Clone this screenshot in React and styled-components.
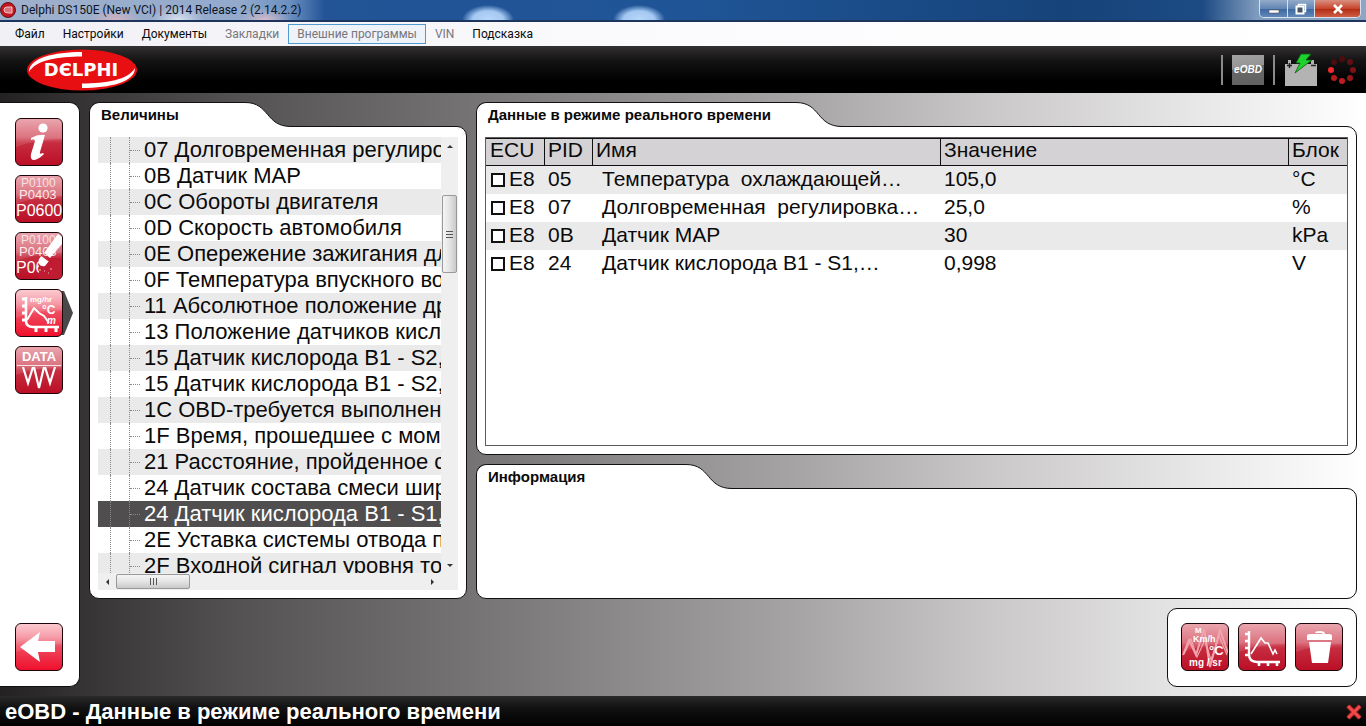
import React, { useState } from 'react';
import styled, { createGlobalStyle, css } from 'styled-components';

const GlobalStyle = createGlobalStyle`
  * {
    box-sizing: border-box;
  }
  body {
    margin: 0;
    font-family: 'Liberation Sans', Arial, sans-serif;
    color: #0a0a0a;
  }
  button {
    font: inherit;
    color: inherit;
    padding: 0;
    border: none;
    background: none;
    cursor: pointer;
  }
`;

const Window = styled.div`
  display: flex;
  flex-direction: column;
  min-height: 100vh;
`;

/* ---- title bar and menu ---- */

const TitleBar = styled.header`
  display: flex;
  align-items: flex-start;
  height: 22px;
  padding-right: 5px;
  border-bottom: 2px solid #1d355c;
  background:
    radial-gradient(ellipse 26px 12px at 115px 20px, #d3b3c0 0%, transparent 100%),
    radial-gradient(ellipse 26px 14px at 178px 20px, #d9e2f0 0%, transparent 100%),
    radial-gradient(ellipse 26px 12px at 265px 20px, #d8bccb 0%, transparent 100%),
    radial-gradient(ellipse 26px 15px at 488px 20px, #b9d8fb 0%, #a4c8f2 60%, transparent 100%),
    radial-gradient(ellipse 26px 15px at 639px 20px, #b9d8fb 0%, #a4c8f2 60%, transparent 100%),
    linear-gradient(90deg, #9fb0cb 0, #93aacd 240px, #6a8fc0 290px, #225496 325px, #1f5597 50%, #164379 78%, #1c4a83 88%, #7f9bbd 92%, #8ea6c4 100%);
`;

const AppTitle = styled.h1`
  flex: 1;
  display: flex;
  align-items: center;
  gap: 5px;
  height: 20px;
  margin: 0;
  font-family: Roboto, 'Noto Sans', sans-serif;
  font-size: 12px;
  font-weight: 400;
  color: #0c1526;
`;

const WindowButtons = styled.div`
  display: flex;
  border: 1px solid #d6e0ee;
  border-top: none;
  border-radius: 0 0 5px 5px;
  overflow: hidden;
`;

const WindowButton = styled.button`
  display: flex;
  align-items: center;
  justify-content: center;
  width: ${(props) => (props.$close ? '46px' : '27px')};
  height: 17px;
  background: ${(props) =>
    props.$close
      ? 'linear-gradient(#d98f80 0, #c8452c 50%, #b02b12 51%, #cf5f45 100%)'
      : 'linear-gradient(#93abca 0, #6386b4 50%, #3d669f 51%, #6088b8 100%)'};
  & + & {
    border-left: 1px solid #d6e0ee;
  }
`;

const MenuBar = styled.nav`
  display: flex;
  align-items: center;
  height: 24px;
  padding: 0 6px;
  background: linear-gradient(90deg, #f1f0f5 0, #fbfbfd 50%, #ffffff 100%);
  font-family: Roboto, 'Noto Sans', sans-serif;
  font-size: 12px;
`;

const MenuItem = styled.button`
  height: 20px;
  padding: 0 8px;
  border: 1px solid ${(props) => (props.$active ? '#4f9bd0' : 'transparent')};
  background: ${(props) => (props.$active ? '#edf3f9' : 'transparent')};
  color: ${(props) => (props.$muted ? '#77767a' : '#0a0a0a')};
  line-height: 18px;
  white-space: nowrap;
`;

/* ---- brand strip ---- */

const BrandBar = styled.div`
  display: flex;
  align-items: center;
  justify-content: space-between;
  height: 47px;
  padding: 0 9px 0 26px;
  background: linear-gradient(#333132 0, #151414 30%, #000 75%);
`;

const StatusIcons = styled.div`
  display: flex;
  align-items: center;
  gap: 9px;
`;

const Divider = styled.span`
  width: 2px;
  height: 30px;
  background: #8b8a8b;
`;

const ProtocolBadge = styled.span`
  display: flex;
  align-items: center;
  justify-content: center;
  width: 32px;
  height: 30px;
  background: linear-gradient(172deg, #a3a2a3 0, #949394 42%, #6a696a 43%, #626162 100%);
  color: #fff;
  font-size: 10px;
  font-style: italic;
  font-weight: 700;
`;

/* ---- workspace ---- */

const Workspace = styled.main`
  flex: 1;
  display: grid;
  grid-template-columns: 80px 378px minmax(0, 1fr);
  grid-template-rows: 1fr 135px auto;
  gap: 9px;
  padding: 9px 9px 9px 0;
  background: linear-gradient(90deg, #242122 0, #383637 7%, #555354 18%, #747273 34%, #a5a3a4 58%, #c9c7c8 72%, #e9e8e8 88%, #ffffff 100%);
`;

const SideBar = styled.aside`
  grid-row: 1 / 4;
  display: flex;
  flex-direction: column;
  gap: 9px;
  padding: 15px;
  border: 1px solid #111;
  border-left: none;
  border-radius: 0 10px 10px 0;
  background: #fff;
`;

const ToolSlot = styled.div`
  position: relative;
  display: flex;
  margin-top: ${(props) => (props.$last ? 'auto' : '0')};
`;

const SelectedMark = styled.svg`
  position: absolute;
  left: 44px;
  top: 2px;
`;

const ToolButton = styled.button`
  position: relative;
  display: block;
  width: 48px;
  height: 48px;
  border: 1px solid #1c0508;
  border-radius: 6px;
  overflow: hidden;
  background: ${(props) =>
    props.$bright
      ? 'linear-gradient(#fbc3ca 0, #f58c9a 30%, #ee4a5f 50%, #f00f2c 100%)'
      : 'linear-gradient(#e79aa3 0, #d7606f 40%, #c62d40 52%, #bb0f26 100%)'};
  svg {
    display: block;
  }
`;

const PanelBox = styled.section`
  display: flex;
  flex-direction: column;
  min-width: 0;
  ${(props) =>
    props.$tall &&
    css`
      grid-row: 1 / 3;
      grid-column: 2;
    `}
`;

const Tab = styled.div`
  position: relative;
  z-index: 1;
  display: flex;
  height: 25px;
  margin-bottom: -1px;
`;

const TabLabel = styled.h2`
  width: ${(props) => props.$width}px;
  margin: 0;
  padding-left: 11px;
  border-top: 1px solid #111;
  border-left: 1px solid #111;
  border-radius: 10px 0 0 0;
  background: #fff;
  font-size: 15px;
  font-weight: 700;
  line-height: 24px;
  white-space: nowrap;
`;

const PanelBody = styled.div`
  flex: 1;
  display: flex;
  flex-direction: column;
  min-height: 0;
  padding: 10px 8px 8px;
  border: 1px solid #111;
  border-radius: 0 10px 10px 10px;
  background: #fff;
`;

/* ---- parameter tree ---- */

const TreeGrid = styled.div`
  flex: 1;
  display: grid;
  grid-template-columns: minmax(0, 1fr) 17px;
  grid-template-rows: minmax(0, 1fr) 17px;
  background: #f0eff0;
`;

const TreeView = styled.div`
  position: relative;
  min-height: 436px;
`;

const TreeList = styled.ul`
  position: absolute;
  inset: 0;
  margin: 0;
  padding: 0;
  overflow: hidden;
  list-style: none;
  font-size: 22px;
`;

const TreeRow = styled.li`
  display: flex;
  height: 26px;
  padding-left: 12px;
  line-height: 26px;
  white-space: nowrap;
  cursor: default;
  background: ${(props) => (props.$striped ? '#ebeaeb' : '#fff')};
  ${(props) =>
    props.$selected &&
    css`
      background: #504e4f;
      color: #fff;
    `}
`;

const Guide = styled.span`
  flex: none;
  width: ${(props) => props.$width}px;
  border-left: 1px dotted #8a898a;
`;

const Branch = styled.span`
  flex: none;
  width: 10px;
  height: 14px;
  margin-right: 4px;
  border-bottom: 1px dotted #8a898a;
`;

const VerticalBar = styled.div`
  display: flex;
  flex-direction: column;
  align-items: flex-start;
  justify-content: space-between;
`;

const HorizontalBar = styled.div`
  display: flex;
  align-items: center;
`;

const ScrollArrow = styled.button`
  display: flex;
  align-items: center;
  justify-content: center;
  width: 18px;
  height: 17px;
  margin-left: ${(props) => (props.$end ? 'auto' : '0')};
`;

const VerticalThumb = styled.div`
  display: flex;
  align-items: center;
  justify-content: center;
  width: 15px;
  height: 78px;
  margin: 41px 0 auto 1px;
  border: 1px solid #9a999a;
  border-radius: 2px;
  background: linear-gradient(90deg, #f5f5f5 0, #e4e4e5 50%, #c9c8ca 100%);
`;

const HorizontalThumb = styled.div`
  display: flex;
  align-items: center;
  justify-content: center;
  width: 74px;
  height: 15px;
  border: 1px solid #9a999a;
  border-radius: 2px;
  background: linear-gradient(#f5f5f5 0, #e4e4e5 50%, #c9c8ca 100%);
`;

/* ---- live data table ---- */

const TableFrame = styled.div`
  flex: 1;
  border: 1px solid #5c5b5c;
`;

const DataTable = styled.table`
  width: 100%;
  table-layout: fixed;
  border-collapse: separate;
  border-spacing: 0;
  font-size: 21px;
  text-align: left;
`;

const HeadCell = styled.th`
  height: 28px;
  padding: 0 0 4px 4px;
  border-top: 1px solid #111;
  border-bottom: 1px solid #111;
  background: #d4d2d4;
  font-weight: 400;
  line-height: 22px;
  & + & {
    padding-left: 3px;
    border-left: 1px solid #111;
  }
`;

const DataRow = styled.tr`
  background: ${(props) => (props.$striped ? '#ebeaeb' : '#fff')};
`;

const DataCell = styled.td`
  height: 28px;
  padding: 0 0 2px ${(props) => (props.$indent ? '10px' : '4px')};
  line-height: 26px;
  overflow: hidden;
  white-space: pre;
`;

const EcuLabel = styled.label`
  display: flex;
  align-items: center;
  gap: 4px;
`;

const EcuCheck = styled.input`
  appearance: none;
  width: 14px;
  height: 14px;
  margin: 2px 0 0 1px;
  border: 2px solid #111;
  background: #fff;
  &:checked {
    box-shadow: inset 0 0 0 2px #fff, inset 0 0 0 8px #bb0f26;
  }
`;

const ActionBox = styled.div`
  grid-column: 3;
  justify-self: end;
  display: flex;
  gap: 9px;
  padding: 14px 13px 15px;
  border: 1px solid #111;
  border-radius: 10px;
  background: #fff;
`;

const StatusBar = styled.footer`
  display: flex;
  align-items: center;
  justify-content: space-between;
  height: 30px;
  padding: 2px 3px 0 5px;
  background: linear-gradient(#2b2a2a 0, #111 40%, #000 100%);
  color: #fff;
  font-size: 22px;
  font-weight: 700;
`;

const menu = [
  { label: 'Файл' },
  { label: 'Настройки' },
  { label: 'Документы' },
  { label: 'Закладки', muted: true },
  { label: 'Внешние программы', muted: true, active: true },
  { label: 'VIN', muted: true },
  { label: 'Подсказка' },
];

const parameters = [
  '07 Долговременная регулировка',
  '0B Датчик MAP',
  '0C Обороты двигателя',
  '0D Скорость автомобиля',
  '0E Опережение зажигания для',
  '0F Температура впускного воздуха',
  '11 Абсолютное положение дросселя',
  '13 Положение датчиков кислорода',
  '15 Датчик кислорода B1 - S2,',
  '15 Датчик кислорода B1 - S2,',
  '1C OBD-требуется выполнение',
  '1F Время, прошедшее с момента',
  '21 Расстояние, пройденное с',
  '24 Датчик состава смеси широкий',
  '24 Датчик кислорода B1 - S1,',
  '2E Уставка системы отвода паров',
  '2F Входной сигнал уровня топлива',
];

const readings = [
  { ecu: 'E8', pid: '05', name: 'Температура  охлаждающей…', value: '105,0', unit: '°C' },
  { ecu: 'E8', pid: '07', name: 'Долговременная  регулировка…', value: '25,0', unit: '%' },
  { ecu: 'E8', pid: '0B', name: 'Датчик MAP', value: '30', unit: 'kPa' },
  { ecu: 'E8', pid: '24', name: 'Датчик кислорода B1 - S1,…', value: '0,998', unit: 'V' },
];

const Icon = ({ children }) => (
  <svg width="46" height="46" viewBox="0 0 46 46" fontFamily="Liberation Sans, Arial, sans-serif">
    <path d="M0 0H46V20Q22 20 0 28Z" fill="#fff" opacity="0.12" />
    {children}
  </svg>
);

const InfoIcon = () => (
  <Icon>
    <circle cx="27" cy="9" r="4.6" fill="#fff" />
    <path d="M15 19Q22 15 29 16L24 33Q23 36 27 34L28 35Q22 41 17 41Q14 40 15 35L19 22Q18 19 15 21Z" fill="#fff" />
  </Icon>
);

const CodeLines = () => (
  <g fill="#fff">
    <text x="5" y="11" fontSize="12" opacity="0.7">P0100</text>
    <text x="3" y="23" fontSize="13" opacity="0.85">P0403</text>
    <text x="0" y="40" fontSize="16">P0600</text>
  </g>
);

const CodesIcon = () => (
  <Icon>
    <CodeLines />
  </Icon>
);

const EraseIcon = () => (
  <Icon>
    <CodeLines />
    <path d="M23 25H46V46H23Z" fill="#bf1c32" />
    <path d="M42 1L46 4V11L34 25L28 20Z" fill="#fff" />
    <path d="M26 22L33 28L29 33Q25 34 23 31Q22 28 23 26Z" fill="#fff" />
    <path d="M25 22L33 28" stroke="#c62d40" strokeWidth="1.5" />
    <path d="M23 37h2M28 38h1M34 36h2M32 40h1" stroke="#fff" strokeWidth="1" opacity="0.7" />
  </Icon>
);

const LiveDataIcon = () => (
  <Icon>
    <g fill="none" stroke="#fff">
      <path d="M10 7V31Q10 37 17 37H43" strokeWidth="2.6" />
      <path d="M6 9h4M6 16h4M6 23h4M6 30h4M20 42v-4M30 42v-4M40 42v-4" strokeWidth="3" />
      <path d="M11 30L18 18L23 23L28 26L33 33" strokeWidth="2" />
    </g>
    <g fill="#fff" fontWeight="700">
      <text x="14" y="12" fontSize="8">mg/hr</text>
      <text x="26" y="24" fontSize="12">°C</text>
      <text x="31" y="34" fontSize="10" fontStyle="italic">m</text>
    </g>
  </Icon>
);

const DataIcon = () => (
  <Icon>
    <text x="23" y="14" fontSize="13" fontWeight="700" textAnchor="middle" fill="#fff">DATA</text>
    <path d="M1 18.5H45" stroke="#fff" strokeWidth="1.2" opacity="0.8" />
    <path d="M7 20L12 36L17 20M18 20L23 41L28 20M29 20L34 36L39 20" fill="none" stroke="#fff" strokeWidth="2.2" />
  </Icon>
);

const BackIcon = () => (
  <Icon>
    <path d="M4 23L24 8L22 17H39V28H22L24 38Z" fill="#fff" />
  </Icon>
);

const UnitsIcon = () => (
  <Icon>
    <path d="M1 31L7 16L14 31L22 5L28 43L38 6L46 29" fill="none" stroke="#f3a3ac" strokeWidth="2" />
    <path d="M2 30L9 15L15 33L23 16L29 36L37 12L45 31" fill="none" stroke="#f3a3ac" strokeWidth="1.2" />
    <g fill="#fff" fontWeight="700">
      <text x="13" y="9" fontSize="8">M</text>
      <text x="11" y="18" fontSize="9">Km/h</text>
      <text x="27" y="31" fontSize="13">°C</text>
      <text x="7" y="42" fontSize="10">mg / sr</text>
    </g>
  </Icon>
);

const GraphIcon = () => (
  <Icon>
    <g fill="none" stroke="#fff">
      <path d="M10 7V30Q10 38 18 38H41" strokeWidth="2.4" />
      <path d="M6 10h4M6 17h4M6 24h4M6 31h4M20 42v-4M29 42v-4M38 42v-4" strokeWidth="2.6" />
      <path d="M12 30L22 14L26 19L29 19L34 30L36 26L38 30" strokeWidth="1.6" />
    </g>
  </Icon>
);

const TrashIcon = () => (
  <Icon>
    <path d="M20 9Q20 8 24 8Q28 8 28 10" fill="none" stroke="#fff" strokeWidth="2" />
    <path d="M11 12Q11 10 14 10H33Q36 10 36 12V16H11Z" fill="#fff" />
    <path d="M13 18H35L32 39H16Z" fill="#fff" />
  </Icon>
);

const DelphiLogo = () => (
  <svg width="112" height="42" viewBox="0 0 112 42" role="img" aria-label="Delphi">
    <ellipse cx="56" cy="21" rx="55" ry="20.5" fill="#e80f12" />
    <path d="M3 23C3 9 28 3 56 3V7.5C32 7.5 10 11 3 23Z" fill="#fff" />
    <path d="M109 19C109 33 84 39 56 39V34.5C80 34.5 102 31 109 19Z" fill="#fff" />
    <text x="55" y="27" fontFamily="DejaVu Sans, sans-serif" fontSize="18" fontWeight="700" fill="#fff" textAnchor="middle">
      DЄLPHI
    </text>
  </svg>
);

const AppBall = () => (
  <svg width="16" height="16" viewBox="0 0 16 16">
    <circle cx="8" cy="8" r="7.5" fill="#c4161f" stroke="#5f1419" />
    <path d="M4 8Q4 5 7 5H12V11H8Q4 11 4 8Z" fill="#d9727a" stroke="#f3c5c8" strokeWidth="1" />
  </svg>
);

const BatteryIcon = () => (
  <svg width="34" height="34" viewBox="0 0 34 34">
    <path d="M1 11H4V7H7V11H27V7H30V11H33V33H1Z" fill="#b4b3b4" />
    <path d="M3 12.5h5M5.5 10v5M27 12.5h5" stroke="#222" strokeWidth="1.5" />
    <path d="M17 1H27L22 7H28L11 20L16 10H12Z" fill="#1fd12c" stroke="#0b5d12" strokeWidth="0.8" />
  </svg>
);

const spinnerDots = [
  [15, 4, '#4a0d10'],
  [23, 7, '#5f1013'],
  [26, 15, '#7d1216'],
  [23, 23, '#97161a'],
  [15, 26, '#c01d23'],
  [7, 23, '#b8181e'],
  [4, 15, '#f32a30'],
  [7, 7, '#4a0d10'],
];

const Spinner = () => (
  <svg width="30" height="30" viewBox="0 0 30 30">
    {spinnerDots.map(([x, y, color]) => (
      <circle key={`${x}-${y}`} cx={x} cy={y} r="3" fill={color} />
    ))}
  </svg>
);

const Arrow = ({ d }) => (
  <svg width="8" height="8" viewBox="0 0 8 8">
    <path d={d} fill="#333" />
  </svg>
);

const Panel = ({ title, tabWidth, tall, children }) => (
  <PanelBox $tall={tall}>
    <Tab>
      <TabLabel $width={tabWidth}>{title}</TabLabel>
      <svg width="46" height="25" viewBox="0 0 46 25">
        <path d="M0 0.5C25 0.5 20 24.5 46 24.5V25H0Z" fill="#fff" />
        <path d="M0 0.5C25 0.5 20 24.5 46 24.5" fill="none" stroke="#111" />
      </svg>
    </Tab>
    <PanelBody>{children}</PanelBody>
  </PanelBox>
);

const tools = [
  { id: 'info', label: 'Информация', icon: <InfoIcon /> },
  { id: 'codes', label: 'Коды неисправностей', icon: <CodesIcon /> },
  { id: 'erase', label: 'Стереть коды', icon: <EraseIcon /> },
  { id: 'live', label: 'Данные в режиме реального времени', icon: <LiveDataIcon /> },
  { id: 'data', label: 'Запись данных', icon: <DataIcon /> },
];

const App = () => {
  const [tool, setTool] = useState('live');
  const [selected, setSelected] = useState(14);

  return (
    <>
      <GlobalStyle />
      <Window>
        <TitleBar>
          <AppTitle>
            <AppBall />
            Delphi DS150E (New VCI) | 2014 Release 2 (2.14.2.2)
          </AppTitle>
          <WindowButtons>
            <WindowButton aria-label="Свернуть">
              <svg width="12" height="10" viewBox="0 0 12 10">
                <path d="M1 6H11V9H1Z" fill="#fff" stroke="#444" strokeWidth="0.5" />
              </svg>
            </WindowButton>
            <WindowButton aria-label="Восстановить">
              <svg width="12" height="12" viewBox="0 0 12 12">
                <path d="M3.5 3V1.5H10.5V8.5H9" fill="none" stroke="#fff" strokeWidth="1.5" />
                <path d="M1.5 3.5H8.5V10.5H1.5Z" fill="#456" stroke="#fff" strokeWidth="2" />
              </svg>
            </WindowButton>
            <WindowButton $close aria-label="Закрыть">
              <svg width="12" height="10" viewBox="0 0 12 10">
                <path d="M2 1L10 9M10 1L2 9" stroke="#fff" strokeWidth="2.5" />
              </svg>
            </WindowButton>
          </WindowButtons>
        </TitleBar>

        <MenuBar>
          {menu.map((item) => (
            <MenuItem key={item.label} $muted={item.muted} $active={item.active}>
              {item.label}
            </MenuItem>
          ))}
        </MenuBar>

        <BrandBar>
          <DelphiLogo />
          <StatusIcons>
            <Divider />
            <ProtocolBadge>eOBD</ProtocolBadge>
            <Divider />
            <BatteryIcon />
            <Spinner />
          </StatusIcons>
        </BrandBar>

        <Workspace>
          <SideBar>
            {tools.map((item) => (
              <ToolSlot key={item.id}>
                {tool === item.id && (
                  <SelectedMark width="15" height="44" viewBox="0 0 15 44">
                    <path d="M0 0H5L14 22L5 44H0Z" fill="#4a4849" />
                  </SelectedMark>
                )}
                <ToolButton $bright={tool === item.id} aria-label={item.label} onClick={() => setTool(item.id)}>
                  {item.icon}
                </ToolButton>
              </ToolSlot>
            ))}
            <ToolSlot $last>
              <ToolButton $bright aria-label="Назад">
                <BackIcon />
              </ToolButton>
            </ToolSlot>
          </SideBar>

          <Panel title="Величины" tabWidth={156} tall>
            <TreeGrid>
              <TreeView>
                <TreeList>
                  {parameters.map((text, index) => (
                    <TreeRow
                      key={index}
                      $striped={index % 2 === 0}
                      $selected={index === selected}
                      onClick={() => setSelected(index)}
                    >
                      <Guide $width={19} />
                      <Guide $width={1} />
                      <Branch />
                      {text}
                    </TreeRow>
                  ))}
                </TreeList>
              </TreeView>
              <VerticalBar>
                <ScrollArrow aria-label="Вверх">
                  <Arrow d="M1 6L4 3L7 6Z" />
                </ScrollArrow>
                <VerticalThumb>
                  <svg width="7" height="9" viewBox="0 0 7 9">
                    <path d="M0 1.5H7M0 4.5H7M0 7.5H7" stroke="#555" />
                  </svg>
                </VerticalThumb>
                <ScrollArrow aria-label="Вниз">
                  <Arrow d="M1 3L4 6L7 3Z" />
                </ScrollArrow>
              </VerticalBar>
              <HorizontalBar>
                <ScrollArrow aria-label="Влево">
                  <Arrow d="M6 1L3 4L6 7Z" />
                </ScrollArrow>
                <HorizontalThumb>
                  <svg width="9" height="7" viewBox="0 0 9 7">
                    <path d="M1.5 0V7M4.5 0V7M7.5 0V7" stroke="#555" />
                  </svg>
                </HorizontalThumb>
                <ScrollArrow $end aria-label="Вправо">
                  <Arrow d="M3 1L6 4L3 7Z" />
                </ScrollArrow>
              </HorizontalBar>
            </TreeGrid>
          </Panel>

          <Panel title="Данные в режиме реального времени" tabWidth={320}>
            <TableFrame>
              <DataTable>
                <colgroup>
                  <col width="58" />
                  <col width="48" />
                  <col />
                  <col />
                  <col width="59" />
                </colgroup>
                <thead>
                  <tr>
                    <HeadCell>ECU</HeadCell>
                    <HeadCell>PID</HeadCell>
                    <HeadCell>Имя</HeadCell>
                    <HeadCell>Значение</HeadCell>
                    <HeadCell>Блок</HeadCell>
                  </tr>
                </thead>
                <tbody>
                  {readings.map((row, index) => (
                    <DataRow key={row.pid} $striped={index % 2 === 0}>
                      <DataCell>
                        <EcuLabel>
                          <EcuCheck type="checkbox" />
                          {row.ecu}
                        </EcuLabel>
                      </DataCell>
                      <DataCell>{row.pid}</DataCell>
                      <DataCell $indent>{row.name}</DataCell>
                      <DataCell>{row.value}</DataCell>
                      <DataCell>{row.unit}</DataCell>
                    </DataRow>
                  ))}
                </tbody>
              </DataTable>
            </TableFrame>
          </Panel>

          <Panel title="Информация" tabWidth={210} />

          <ActionBox>
            <ToolButton aria-label="Единицы измерения">
              <UnitsIcon />
            </ToolButton>
            <ToolButton aria-label="График">
              <GraphIcon />
            </ToolButton>
            <ToolButton aria-label="Удалить">
              <TrashIcon />
            </ToolButton>
          </ActionBox>
        </Workspace>

        <StatusBar>
          eOBD - Данные в режиме реального времени
          <svg width="18" height="18" viewBox="0 0 18 18">
            <path d="M3 3L15 15M15 3L3 15" stroke="#8d1a1c" strokeWidth="5" />
            <path d="M3 3L15 15M15 3L3 15" stroke="#ee4a4a" strokeWidth="3" />
          </svg>
        </StatusBar>
      </Window>
    </>
  );
};

export default App;
